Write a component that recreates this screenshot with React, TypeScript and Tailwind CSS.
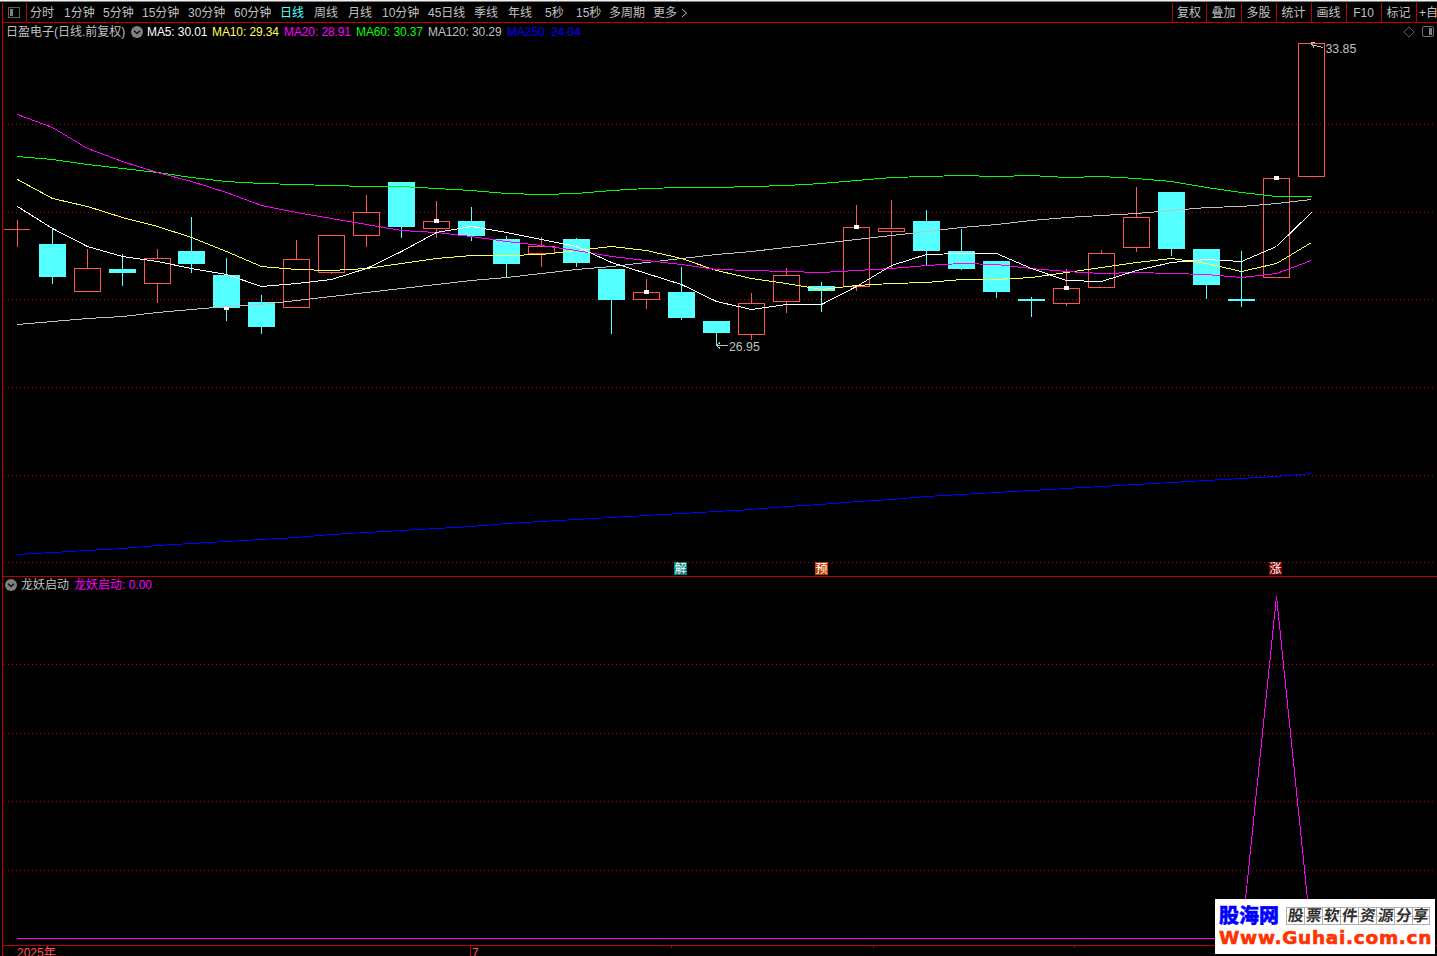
interface Candle {
  x: number;
  top: number;
  bottom: number;
  high: number;
  low: number;
  up?: boolean;
  mark?: number;
}

const periods = [
  { label: '分时', width: 'w-[34px]' },
  { label: '1分钟', width: 'w-[39px]' },
  { label: '5分钟', width: 'w-[39px]' },
  { label: '15分钟', width: 'w-[46px]' },
  { label: '30分钟', width: 'w-[46px]' },
  { label: '60分钟', width: 'w-[46px]' },
  { label: '日线', width: 'w-[34px]', active: true },
  { label: '周线', width: 'w-[34px]' },
  { label: '月线', width: 'w-[34px]' },
  { label: '10分钟', width: 'w-[46px]' },
  { label: '45日线', width: 'w-[46px]' },
  { label: '季线', width: 'w-[34px]' },
  { label: '年线', width: 'w-[37px]' },
  { label: '5秒', width: 'w-[31px]' },
  { label: '15秒', width: 'w-[33px]' },
  { label: '多周期', width: 'w-[44px]' },
  { label: '更多', width: 'w-[28px]' },
];

const tools = ['复权', '叠加', '多股', '统计', '画线', 'F10', '标记'];

const averages = [
  { label: 'MA5: 30.01', className: 'w-[65px] text-white' },
  { label: 'MA10: 29.34', className: 'w-[72px] text-[#ffff54]' },
  { label: 'MA20: 28.91', className: 'w-[72px] text-[#ff00ff]' },
  { label: 'MA60: 30.37', className: 'w-[72px] text-[#00ff00]' },
  { label: 'MA120: 30.29', className: 'w-[79px] text-[#c0c0c0]' },
  { label: 'MA250: 24.04', className: 'w-[79px] text-[#0000ff]' },
];

const candles: Candle[] = [
  { x: 17, top: 229, bottom: 230, high: 220, low: 247, up: true },
  { x: 52, top: 244, bottom: 277, high: 229, low: 284 },
  { x: 87, top: 268, bottom: 292, high: 249, low: 292, up: true },
  { x: 122, top: 269, bottom: 273, high: 254, low: 286 },
  { x: 157, top: 258, bottom: 284, high: 249, low: 303, up: true },
  { x: 191, top: 251, bottom: 264, high: 217, low: 273 },
  { x: 226, top: 275, bottom: 308, high: 258, low: 321, mark: 307 },
  { x: 261, top: 302, bottom: 327, high: 295, low: 334 },
  { x: 296, top: 259, bottom: 308, high: 240, low: 308, up: true },
  { x: 331, top: 235, bottom: 273, high: 235, low: 274, up: true },
  { x: 366, top: 212, bottom: 236, high: 195, low: 247, up: true },
  { x: 401, top: 182, bottom: 227, high: 182, low: 238 },
  { x: 436, top: 221, bottom: 229, high: 201, low: 238, up: true, mark: 219 },
  { x: 471, top: 221, bottom: 236, high: 207, low: 241 },
  { x: 506, top: 239, bottom: 264, high: 236, low: 277 },
  { x: 541, top: 246, bottom: 254, high: 237, low: 267, up: true },
  { x: 576, top: 239, bottom: 263, high: 238, low: 267 },
  { x: 611, top: 269, bottom: 300, high: 269, low: 334 },
  { x: 646, top: 292, bottom: 300, high: 279, low: 309, up: true, mark: 290 },
  { x: 681, top: 292, bottom: 318, high: 267, low: 320 },
  { x: 716, top: 321, bottom: 333, high: 321, low: 346 },
  { x: 751, top: 303, bottom: 335, high: 293, low: 340, up: true },
  { x: 786, top: 275, bottom: 302, high: 268, low: 313, up: true },
  { x: 821, top: 286, bottom: 291, high: 282, low: 312 },
  { x: 856, top: 227, bottom: 287, high: 205, low: 291, up: true, mark: 225 },
  { x: 891, top: 228, bottom: 232, high: 200, low: 268, up: true },
  { x: 926, top: 221, bottom: 251, high: 210, low: 265 },
  { x: 961, top: 251, bottom: 269, high: 229, low: 270 },
  { x: 996, top: 261, bottom: 292, high: 261, low: 298 },
  { x: 1031, top: 299, bottom: 301, high: 297, low: 317 },
  { x: 1066, top: 288, bottom: 304, high: 269, low: 306, up: true, mark: 286 },
  { x: 1101, top: 253, bottom: 288, high: 250, low: 288, up: true },
  { x: 1136, top: 217, bottom: 248, high: 187, low: 252, up: true },
  { x: 1171, top: 192, bottom: 249, high: 192, low: 256 },
  { x: 1206, top: 249, bottom: 285, high: 249, low: 299 },
  { x: 1241, top: 299, bottom: 301, high: 251, low: 307 },
  { x: 1276, top: 178, bottom: 278, high: 178, low: 278, up: true, mark: 176 },
  { x: 1311, top: 43, bottom: 177, high: 43, low: 177, up: true },
];

// One value per candle
const lines = [
  {
    color: '#c0c0c0',
    values: [324, 321, 318, 316, 312, 309, 306, 304, 300, 296, 292, 288, 284, 280, 277, 273, 269, 266, 262, 258, 254, 251, 247, 243, 239, 235, 231, 227, 224, 220, 217, 215, 213, 210, 207, 206, 203, 199],
  },
  {
    color: '#00ff00',
    values: [156, 159, 164, 168, 172, 177, 181, 183, 184, 185, 186, 186, 188, 190, 193, 194, 193, 190, 188, 187, 187, 186, 185, 183, 180, 177, 176, 175, 176, 175, 177, 176, 178, 181, 187, 192, 196, 196],
  },
  {
    color: '#0000ff',
    values: [554, 552, 550, 548, 545, 543, 541, 539, 537, 534, 532, 530, 528, 526, 523, 521, 519, 517, 515, 513, 511, 509, 506, 504, 501, 499, 496, 494, 492, 490, 488, 486, 484, 482, 480, 478, 476, 473],
  },
  {
    color: '#ffff54',
    values: [179, 198, 206, 217, 226, 237, 251, 266, 269, 270, 268, 263, 258, 255, 255, 254, 250, 246, 250, 258, 270, 278, 283, 289, 285, 283, 282, 279, 279, 277, 272, 267, 262, 258, 263, 271, 263, 242],
  },
  {
    color: '#ff00ff',
    values: [114, 127, 148, 161, 172, 181, 192, 205, 212, 218, 224, 230, 232, 236, 241, 245, 250, 256, 260, 264, 269, 270, 271, 272, 270, 268, 265, 263, 264, 268, 271, 273, 272, 273, 274, 277, 273, 260],
  },
  {
    color: '#ffffff',
    values: [206, 228, 246, 256, 261, 268, 274, 286, 283, 279, 268, 251, 232, 226, 232, 239, 246, 262, 273, 284, 301, 309, 304, 304, 286, 265, 254, 253, 253, 268, 280, 281, 270, 262, 259, 261, 246, 212],
  },
];

const badges = [
  { x: 674, text: '解', fill: '#008080' },
  { x: 815, text: '预', fill: '#c04000' },
  { x: 1269, text: '涨', fill: '#800000' },
];

function GridLines({ rows }: { rows: number[] }) {
  return (
    <g stroke="#c00000" strokeDasharray="1 3" shapeRendering="crispEdges">
      {rows.map((y) => (
        <line key={y} x1={4} x2={1434} y1={y + 0.5} y2={y + 0.5} />
      ))}
    </g>
  );
}

function CandleShape({ candle }: { candle: Candle }) {
  const { x, top, bottom, high, low, up } = candle;
  const color = up ? '#ff5454' : '#54ffff';
  return (
    <g>
      {high < top && <rect x={x} y={high} width={1} height={top - high} fill={color} />}
      {low > bottom && <rect x={x} y={bottom} width={1} height={low - bottom} fill={color} />}
      {up && bottom - top > 1 ? (
        <rect x={x - 12.5} y={top + 0.5} width={26} height={bottom - top - 1} fill="none" stroke={color} />
      ) : (
        <rect x={x - 13} y={top} width={up ? 26 : 27} height={bottom - top} fill={color} />
      )}
    </g>
  );
}

function ToggleIcon() {
  return (
    <svg className="shrink-0" width="12" height="12" viewBox="0 0 12 12">
      <circle cx="6" cy="6" r="6" fill="#808080" />
      <path d="M3 4.7 6 7.5 9 4.7" fill="none" stroke="#101010" strokeWidth="1.4" />
    </svg>
  );
}

function Toolbar() {
  return (
    <div className="flex h-5 shrink-0 items-center border-b border-[#c00000] text-[#c0c0c0]">
      <div className="flex h-full w-6 shrink-0 items-center border-r border-[#c00000] pl-[5px]">
        <svg width="12" height="11" viewBox="0 0 12 11" shapeRendering="crispEdges">
          <rect x="0.5" y="0.5" width="11" height="10" rx="1" fill="none" stroke="#606060" />
          <rect x="2" y="2" width="3" height="7" fill="#808080" />
        </svg>
      </div>
      <div className="flex flex-1 items-center pl-[3px]">
        {periods.map((p) => (
          <span key={p.label} className={`${p.width} shrink-0 ${p.active ? 'text-[#54ffff]' : ''}`}>
            {p.label}
          </span>
        ))}
        <svg width="7" height="10" viewBox="0 0 7 10">
          <path d="M1 1 5.5 5 1 9" fill="none" stroke="#c0c0c0" />
        </svg>
      </div>
      {tools.map((tool) => (
        <button key={tool} className="h-full w-[35px] shrink-0 border-l border-[#c00000] pr-px first-of-type:w-[34px]">
          {tool}
        </button>
      ))}
      <div className="flex h-full w-[21px] shrink-0 items-center overflow-hidden border-l border-[#c00000] pl-[2px] whitespace-nowrap">
        +自
      </div>
    </div>
  );
}

function MainChart() {
  return (
    <svg className="block shrink-0" width="1434" height="535" viewBox="3 41 1434 535">
      <GridLines rows={[124, 212, 299, 387, 475, 562]} />
      <g shapeRendering="crispEdges">
        {candles.map((candle) => (
          <CandleShape key={candle.x} candle={candle} />
        ))}
        {lines.map((line) => (
          <polyline
            key={line.color}
            fill="none"
            stroke={line.color}
            points={line.values.map((v, i) => `${candles[i].x + 0.5},${v + 0.5}`).join(' ')}
          />
        ))}
        {candles.map(
          (c) => c.mark && <rect key={c.x} x={c.x - 2} y={c.mark} width={5} height={c.up ? 4 : 3} fill="#fff" />
        )}
      </g>
      <g fill="none" stroke="#c0c0c0" shapeRendering="crispEdges">
        <path d="M1311 44.5 1323 47.5M1315 42.5H1311.5V44.5L1314 47.5" />
        <path d="M716.5 345.5H728M720 342.5 716.5 345.5 720 348.5" />
      </g>
      <g fill="#c0c0c0" fontSize="12.3">
        <text x="1325.5" y="53">33.85</text>
        <text x="729" y="351">26.95</text>
      </g>
      {badges.map((b) => (
        <g key={b.text}>
          <rect x={b.x} y={562} width={13} height={13} fill={b.fill} />
          <text x={b.x + 0.5} y={573} fontSize="12" fill="#fff">
            {b.text}
          </text>
        </g>
      ))}
    </svg>
  );
}

function Watermark() {
  return (
    <div className="absolute top-[899px] left-[1215px] h-[55px] w-[220px] bg-white pt-[6px] pl-1">
      <div className="flex h-[22px] items-center">
        <span className="w-[67px] text-[20px] leading-[22px] font-black text-[#0000ff] [-webkit-text-stroke:0.4px_#0000ff]">
          股海网
        </span>
        <div className="flex h-[18px] border border-[#b0b0b0]">
          {'股票软件资源分享'.split('').map((char) => (
            <span
              key={char}
              className="flex w-[18px] items-center justify-center border-r border-[#b0b0b0] bg-[linear-gradient(#ccc,#ccc)] bg-[length:100%_1px] bg-center bg-no-repeat text-[15.5px] leading-4 font-bold text-[#303030] last:w-4 last:border-r-0"
            >
              <span className="-skew-x-6">{char}</span>
            </span>
          ))}
        </div>
      </div>
      <div className="font-['DejaVu_Sans'] text-[18.5px] leading-[22px] font-bold tracking-[0.7px] whitespace-nowrap text-[#ff3300] [-webkit-text-stroke:0.6px_#ff3300]">
        Www.Guhai.com.cn
      </div>
    </div>
  );
}

export default function App() {
  return (
    <div className="relative flex h-[956px] w-[1437px] flex-col overflow-hidden bg-black font-['Liberation_Sans','Noto_Sans_CJK_SC',sans-serif] text-xs leading-4">
      <div className="h-[2px] shrink-0 border-b border-[#808080] bg-[#f0f0f0]" />
      <div className="mt-px ml-[2px] flex flex-1 flex-col border-l border-[#c00000]">
        <Toolbar />

        <div className="flex h-[18px] shrink-0 items-center pl-[3px]">
          <span className="w-[125px] whitespace-nowrap text-[#c0c0c0]">日盈电子(日线.前复权)</span>
          <ToggleIcon />
          <div className="ml-1 flex flex-1 tracking-[-0.1px]">
            {averages.map((ma) => (
              <span key={ma.label} className={`${ma.className} whitespace-nowrap`}>
                {ma.label}
              </span>
            ))}
          </div>
          <svg className="mr-[3px]" width="31" height="12" viewBox="0 0 31 12">
            <path d="M6 1 11 6 6 11 1 6Z" fill="none" stroke="#606060" />
            <rect x="19.5" y="0.5" width="11" height="10" rx="1.5" fill="none" stroke="#707070" />
            <rect x="26" y="2" width="3" height="7" fill="#808080" />
          </svg>
        </div>

        <MainChart />

        <div className="mb-[2px] flex h-[17px] shrink-0 items-center border-t border-[#c00000] pl-[2px]">
          <ToggleIcon />
          <span className="ml-1 w-[53px] text-[#c0c0c0]">龙妖启动</span>
          <span className="text-[#ff00ff]">龙妖启动: 0.00</span>
        </div>

        <svg className="block shrink-0" width="1434" height="350" viewBox="3 595 1434 350">
          <GridLines rows={[664, 733, 801, 870]} />
          <polyline
            points="17,938.5 1241.5,938.5 1276.5,596 1311.5,938.5"
            fill="none"
            stroke="#ff00ff"
            shapeRendering="crispEdges"
          />
        </svg>

        <div className="flex h-[11px] shrink-0 overflow-hidden border-t border-[#c00000] pl-[14px] leading-[14px] text-[#ff5454]">
          <span className="w-[453px]">2025年</span>
          <span className="w-[201px] border-l border-[#c00000] pl-px">7</span>
          <span className="h-[2px] w-[202px] border-l border-[#c00000]" />
          <span className="h-[2px] w-[201px] border-l border-[#c00000]" />
          <span className="h-[2px] w-[201px] border-l border-[#c00000]" />
        </div>
      </div>
      <Watermark />
    </div>
  );
}
